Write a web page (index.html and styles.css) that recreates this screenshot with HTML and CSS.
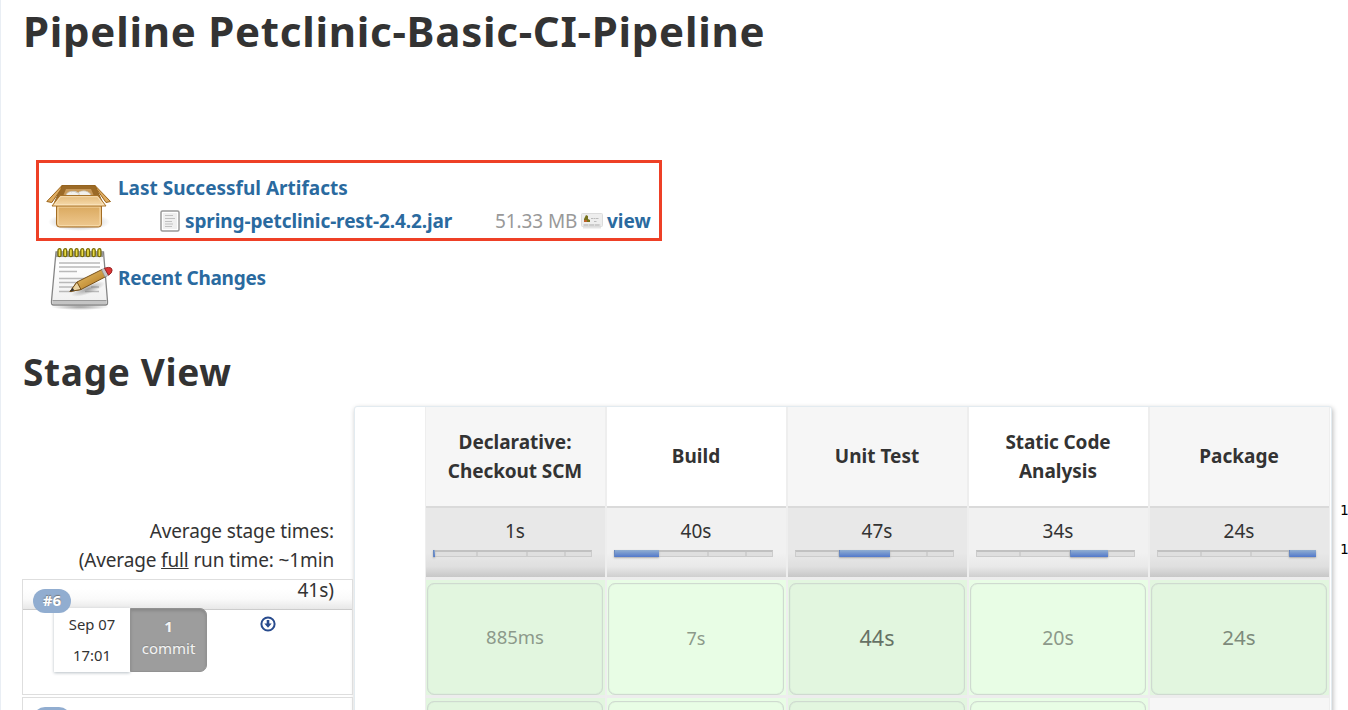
FILE: index.html
```html
<!DOCTYPE html>
<html lang="en">
<head>
<meta charset="utf-8">
<title>Petclinic-Basic-CI-Pipeline</title>
<link rel="stylesheet" href="styles.css">
</head>
<body>
<main class="page">
  <h1 class="title"><span>Pipeline Petclinic-Basic-CI-Pipeline</span></h1>

  <section class="artifacts">
    <svg class="icon-box" width="66" height="52" viewBox="0 0 66 52">
      <defs>
        <linearGradient id="boxFront" x1="0" y1="0" x2="0" y2="1"><stop offset="0" stop-color="#d9a75c"/><stop offset="1" stop-color="#efc990"/></linearGradient>
        <linearGradient id="boxFlap" x1="0" y1="0" x2="0" y2="1"><stop offset="0" stop-color="#e3b877"/><stop offset="1" stop-color="#f7dcae"/></linearGradient>
        <radialGradient id="soft"><stop offset="0" stop-color="#777" stop-opacity=".7"/><stop offset="1" stop-color="#777" stop-opacity="0"/></radialGradient>
      </defs>
      <ellipse cx="33" cy="42" rx="31" ry="9" fill="url(#soft)"/>
      <path d="M16 5.500h33l8 18H8z" fill="#9b6a27" stroke="#94631f"/>
      <path d="M20 9h25l5 12H15z" fill="#c79858"/>
      <path d="M20 16c0-5 8-6 12-3 3-4 13-2 13 3z" fill="#f1f0ec" stroke="#c3b89f" stroke-width=".7"/>
      <path d="M33 13v3M25 12c2-1 5-1 7 1" stroke="#cec9be" fill="none"/>
      <path d="M10.500 25h45v19q0 3-3 3h-39q-3 0-3-3z" fill="url(#boxFront)" stroke="#a36d24"/>
      <path d="M12 27h42v16.500q0 2-2 2H14q-2 0-2-2z" fill="none" stroke="#f6d9a7"/>
      <path d="M14 15.500h38l8 10.500H6z" fill="url(#boxFlap)" stroke="#a87228"/>
      <path d="M14.500 16.700h37l6 8h-49z" fill="none" stroke="#fae6c3" stroke-width=".8"/>
      <path d="m49 5.500 15.500 16-4.500 1-9-13z" fill="#dfac61" stroke="#996319"/>
      <path d="M16 5.500.8 21.500l5 1 9-13z" fill="#dfac61" stroke="#996319"/>
    </svg>
    <div class="artifact-text">
      <a class="link"><span class="t-last">Last Successful Artifacts</span></a>
      <div class="file-row">
        <svg class="icon-file" width="20" height="22" viewBox="0 0 20 22"><rect x="1" y="1" width="18" height="20" rx="1.500" fill="#fff" stroke="#999" stroke-width="1.500"/><rect x="3" y="3" width="14" height="16" fill="#efefef"/><path d="M5 5.500h8M5 8.500h10M5 11.500h7M5 14h8M5 16.500h7" stroke="#c0c0c0"/></svg>
        <a class="link t-jar">spring-petclinic-rest-2.4.2.jar</a>
        <span class="size">51.33 MB</span>
        <svg class="icon-print" width="22" height="16" viewBox="0 0 22 16"><path d="M2 14.500h18" stroke="#e4e4e4" stroke-width="2"/><rect x=".5" y=".5" width="21" height="13" rx="1" fill="#eee" stroke="#dcdcdc"/><path d="M2.500 12h17" stroke="#aaa" stroke-dasharray="5 .6"/><path d="M3 9V6l2-4 2 1v3l2 1v2z" fill="#77721d"/><path d="M3 7h3v2H3z" fill="#be612a"/><path d="M10 5.500h8M13 8.500h3" stroke="#bbb" stroke-dasharray="2 .5"/></svg>
        <a class="link t-view">view</a>
      </div>
    </div>
  </section>

  <section class="changes">
    <svg class="icon-note" width="64" height="64" viewBox="0 0 64 64">
      <defs>
        <linearGradient id="paper" x1="0" y1="0" x2="0" y2="1"><stop offset="0" stop-color="#e8e8e8"/><stop offset=".2" stop-color="#fff"/><stop offset="1" stop-color="#efefef"/></linearGradient>
        <linearGradient id="pencil" x1="0" y1="0" x2="1" y2="1"><stop offset="0" stop-color="#f2d07b"/><stop offset="1" stop-color="#a96b13"/></linearGradient>
      </defs>
      <ellipse cx="31" cy="60" rx="29" ry="3" fill="url(#soft)"/>
      <path d="M7 5h47.500l4 49v2q0 2-2 2h-52q-2 0-2-2v-2z" fill="url(#paper)" stroke="#858585" stroke-width="1.300"/>
      <path d="M7 6h47v4H7z" fill="#999"/>
      <path d="M3.500 53.500h54V57h-54z" fill="#c4c4c4"/><path d="M3.500 53.500h54" stroke="#999"/>
      <path d="M10 16h41M10 20h41M10 24.500h18M10 31.500h31M10 35.500h26M10 40h18M10 44.500h13M42 40h8M36 44.500h14" stroke="#b9b9b9" stroke-width="1.300"/>
      <g fill="#eadb45" stroke="#766b08" stroke-width="1.300"><rect x="9" y="1.700" width="3" height="8" rx="1.500"/><rect x="14.700" y="1.700" width="3" height="8" rx="1.500"/><rect x="20.400" y="1.700" width="3" height="8" rx="1.500"/><rect x="26.100" y="1.700" width="3" height="8" rx="1.500"/><rect x="31.800" y="1.700" width="3" height="8" rx="1.500"/><rect x="37.500" y="1.700" width="3" height="8" rx="1.500"/><rect x="43.200" y="1.700" width="3" height="8" rx="1.500"/><rect x="48.900" y="1.700" width="3" height="8" rx="1.500"/></g>
      <ellipse cx="39" cy="42" rx="18" ry="5" transform="rotate(-20 39 42)" fill="url(#soft)"/>
      <path d="m21 44.500 7-9.500 25-12.500 4 7L32 42.500z" fill="url(#pencil)" stroke="#76501a"/>
      <path d="m21 44.500 7-9.500 4 7.500z" fill="#ead2a0" stroke="#76501a"/><path d="m21 44.500 2.700-3.700 1.600 2.600z" fill="#333"/>
      <path d="m52.500 22.700 3-1.500 4 7-3.500 1.800z" fill="#c5c5c5" stroke="#888" stroke-width=".6"/>
      <path d="m55.500 21.200 4-.8q3.300-.1 3.600 2.600.2 3-3.600 5.200z" fill="#dc3535" stroke="#982222"/>
    </svg>
    <a class="link t-recent">Recent Changes</a>
  </section>

  <h2 class="subtitle"><span>Stage View</span></h2>

  <section class="stage">
    <div class="runs">
      <div class="avg-label"><div class="a1">Average stage times:</div><div class="a2">(Average <u>full</u> run time: ~1min</div><div class="a3">41s)</div></div>
      <div class="run">
        <div class="run-strip"></div>
        <span class="badge">#6</span>
        <div class="run-info">
          <div class="date"><span>Sep 07</span><span>17:01</span></div>
          <div class="commit"><b>1</b><span>commit</span></div>
          <svg class="icon-down" width="16" height="16" viewBox="0 0 16 16"><circle cx="8" cy="8" r="6.600" fill="#fff" stroke="#284b8d" stroke-width="2"/><path d="M8 4v4" stroke="#284b8d" stroke-width="2.600"/><path d="M4.300 7.500h7.400L8 11.800z" fill="#284b8d"/></svg>
        </div>
      </div>
      <div class="run next"><span class="badge"></span></div>
    </div>

    <div class="table">
      <div class="gutter"></div>
      <div class="col odd">
        <div class="head"><span class="h-decl">Declarative:</span><span class="h-check">Checkout SCM</span></div>
        <div class="avg"><span>1s</span><div class="bar"><i></i><i></i><i></i><b style="left:0;width:1px"></b></div></div>
        <div class="cell"><div class="s1">885ms</div></div>
        <div class="cell"><div></div></div>
      </div>
      <div class="col">
        <div class="head"><span class="h-build">Build</span></div>
        <div class="avg"><span>40s</span><div class="bar"><i></i><i></i><i></i><b style="left:0;width:44px"></b></div></div>
        <div class="cell"><div class="s2">7s</div></div>
        <div class="cell"><div></div></div>
      </div>
      <div class="col odd">
        <div class="head"><span class="h-unit">Unit Test</span></div>
        <div class="avg"><span>47s</span><div class="bar"><i></i><i></i><i></i><b style="left:44px;width:50px"></b></div></div>
        <div class="cell"><div class="s3">44s</div></div>
        <div class="cell"><div></div></div>
      </div>
      <div class="col">
        <div class="head"><span class="h-static">Static Code</span><span class="h-anal">Analysis</span></div>
        <div class="avg"><span>34s</span><div class="bar"><i></i><i></i><i></i><b style="left:94px;width:37px"></b></div></div>
        <div class="cell"><div class="s4">20s</div></div>
        <div class="cell"><div></div></div>
      </div>
      <div class="col odd">
        <div class="head"><span class="h-pack">Package</span></div>
        <div class="avg"><span>24s</span><div class="bar"><i></i><i></i><i></i><b style="left:132px;width:26px"></b></div></div>
        <div class="cell"><div class="s5">24s</div></div>
        <div class="cell none"></div>
      </div>
    </div>
    <div class="side"><span>1</span><span>1</span></div>
  </section>
</main>
</body>
</html>
```

FILE: styles.css
```css
* { box-sizing: border-box; }
body { margin: 0; background: #fff; color: #333; font-family: "Noto Sans", sans-serif; font-size: 19px; line-height: 29px; overflow: hidden; }
.page { height: 710px; overflow: hidden; border-left: 1px solid #e9eef4; padding-left: 22px; white-space: nowrap; }
.title { margin: 0; height: 160px; font-size: 42px; line-height: 61px; letter-spacing: 0.73px; }
.subtitle { margin: 0; height: 98px; padding-top: 37px; font-size: 37px; line-height: 54px; letter-spacing: 0.68px; }
.link { color: #2a6a9f; font-weight: 700; }

.artifacts { margin-left: 13px; width: 626px; height: 81px; border: 3px solid #ee4026; display: flex; padding-left: 7px; }
.icon-box { margin-top: 17px; flex: none; }
.artifact-text { padding: 11px 0 0 7px; }
.artifact-text > .link { display: block; height: 31px; margin-left: -1px; }
.file-row { display: flex; height: 32px; padding-left: 41px; }
.icon-file { margin: 5px 5px 0 0; flex: none; }
.t-jar { width: 310px; flex: none; line-height: 32px; letter-spacing: -0.1px; }
.size { width: 84px; flex: none; color: #999; line-height: 32px; letter-spacing: -0.1px; }
.icon-print { margin: 8px 4px 0 2px; flex: none; }
.t-view { line-height: 32px; }

.changes { height: 67px; margin-left: 25px; display: flex; padding-top: 6px; }
.icon-note { margin: 0 6px 0 1px; flex: none; }
.t-recent { padding-top: 17px; margin-left: -1px; letter-spacing: -0.28px; }

.stage { display: flex; height: 304px; }
.runs { width: 331px; flex: none; padding-top: 111px; }
.avg-label { height: 62px; padding-right: 20px; text-align: right; position: relative; z-index: 2; line-height: 29.3px; }
.a1 { letter-spacing: -0.1px; }
.a2 { letter-spacing: -0.14px; }
.run { height: 116px; width: 331px; margin: 0 0 2px -1px; border: 1px solid #dedede; position: relative; }
.run-strip { height: 30px; border-bottom: 1px solid #ccc; background: linear-gradient(#fff 30%, #fafafa 65%, #e8e8e8); }
.badge { position: absolute; left: 10px; top: 9px; z-index: 3; width: 38px; height: 24px; border-radius: 12px; background: #91add0; color: #fff; text-align: center; font-weight: 700; font-size: 15px; line-height: 23px; text-shadow: 0 -1px 1px #777; }
.run-info { display: flex; margin: -2px 0 0 31px; position: relative; }
.date { width: 76px; height: 64px; background: #fff; box-shadow: 0 1px 3px #b7bfc5; text-align: center; font-size: 14.8px; line-height: 31px; padding-top: 1px; display: flex; flex-direction: column; }
.commit { width: 77px; height: 64px; background: #9d9d9d; border: 1px solid #929292; border-radius: 0 7px 7px 0; color: #f4f4f4; text-align: center; font-size: 15px; line-height: 22px; padding-top: 6px; display: flex; flex-direction: column; box-shadow: inset 0 2px 3px #888; text-shadow: 0 -1px 1px #888; }
.icon-down { margin: 8px 0 0 53px; }

.table { width: 978px; height: 310px; flex: none; display: flex; border: 1px solid #e3ebf0; border-radius: 3px; background: #fff; box-shadow: 1px 2px 5px #bbb; }
.gutter { width: 70px; flex: none; }
.col { width: 181px; flex: none; border-left: 1px solid #eee; border-right: 1px solid #eee; background: #fff; }
.odd { background: #f6f6f6; }
.head { height: 99px; padding-right: 1px; display: flex; flex-direction: column; justify-content: center; align-items: center; font-weight: 700; }
.h-check, .h-static { letter-spacing: -0.1px; }
.avg { height: 71px; border-top: 2px solid #dadada; background: linear-gradient(#f1f1f1 65%, #e9e9e9 85%, #cfcfcf); text-align: center; padding: 9px 12px 0 7px; }
.odd .avg { background: linear-gradient(#e8e8e8 65%, #dfdfdf 85%, #c7c7c7); }
.avg span { display: block; height: 33px; padding-left: 4px; }
.bar { position: relative; height: 7px; width: 159px; border: 1px solid #ccc; border-top: 2px solid #c1c1c1; background: #dfdfdf; display: flex; }
.bar i { width: 44px; border-right: 2px solid #cfcfcf; }
.bar i:nth-child(2) { width: 50px; }
.bar i:nth-child(3) { width: 38px; }
.bar b { position: absolute; top: -2px; height: 7px; margin-left: -1px; box-sizing: content-box; background: linear-gradient(#91aed1, #5279cb); box-shadow: 0 1px 2px #aaa; border-left: 1px solid #6989c0; }
.cell { height: 118px; border-top: 3px solid #ededed; background: #e8fde5; padding: 3px 2px 2px 1px; }
.odd .cell { background: #e2f6df; }
.cell div { height: 112px; border: 1px solid #cfdad0; border-radius: 7px; box-shadow: inset 0 0 1px #bbc6c4; line-height: 106px; text-align: center; color: #8c998a; }
.odd .none { background: #f6f6f6; }
.cell .s1 { font-size: 18.5px; }
.cell .s2 { font-size: 18px; line-height: 108px; }
.cell .s3 { font-size: 21.5px; color: #667265; line-height: 108px; }
.cell .s4 { font-size: 19.5px; line-height: 108px; }
.cell .s5 { font-size: 20.5px; color: #7d8a7b; }
.side { padding: 85px 0 0 8px; display: flex; flex-direction: column; font: 14px/39px "DejaVu Sans Mono", monospace; color: #000; }
```
